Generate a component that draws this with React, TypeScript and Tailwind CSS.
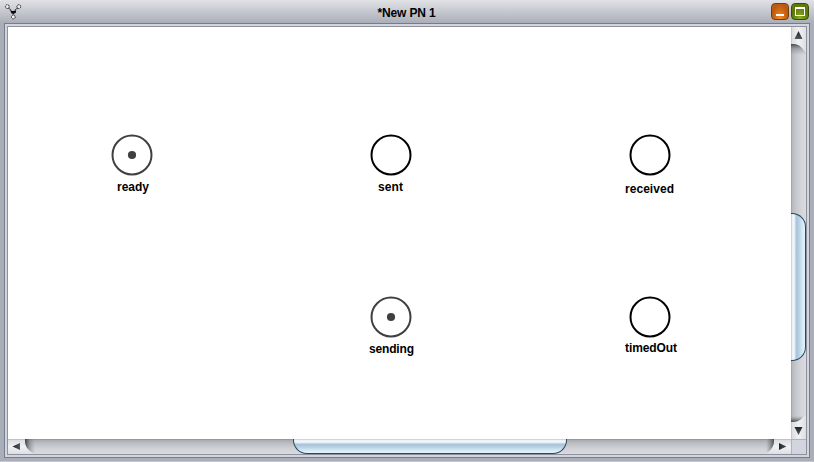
import React from "react";

type Place = { name: string; left: number; top: number; labelX: number; labelY: number; width: number; token?: boolean };

const places: Place[] = [
  { name: "ready", left: 103, top: 107, labelX: 6, labelY: 45, width: 32, token: true },
  { name: "sent", left: 362, top: 107, labelX: 8, labelY: 45, width: 25 },
  { name: "received", left: 621, top: 107, labelX: -4, labelY: 47, width: 49 },
  { name: "sending", left: 362, top: 269, labelX: -1, labelY: 45, width: 45, token: true },
  { name: "timedOut", left: 621, top: 269, labelX: -4, labelY: 44, width: 52 },
];

function PlaceNode({ place }: { place: Place }) {
  const color = place.token ? "#404040" : "#000000";
  return (
    <div className="absolute" style={{ left: place.left, top: place.top }}>
      <svg width="42" height="42" className="block">
        <circle cx="21" cy="21" r="19.5" fill="white" stroke={color} strokeWidth="2" />
        {place.token && <circle cx="21" cy="21" r="4.1" fill={color} />}
      </svg>
      <svg className="absolute h-4 overflow-visible" width={place.width} style={{ left: place.labelX, top: place.labelY }}>
        <text x="0" y="12" textLength={place.width} className="text-[12px] font-bold">{place.name}</text>
      </svg>
    </div>
  );
}

function TitleBar() {
  return (
    <header className="grid h-[23px] shrink-0 grid-cols-[1fr_auto_1fr] bg-linear-to-b from-[#e0e2e5] via-[#c5c8cf] to-[#aaaeb8]">
      <svg width="24" height="23" className="block" fill="none">
        <path d="M8 7.5 12 11.5M18 7.5 14 11.5M13.3 12v4" stroke="#303030" strokeWidth="1.3" strokeDasharray="2 .6" />
        <path d="M10.5 11h5.5v1.5l-1.5 1h-3z" fill="#080808" />
        <g fill="#eee" stroke="#292929" strokeDasharray="1.6 .6">
          <circle cx="7.3" cy="6.6" r="1.9" />
          <circle cx="18.8" cy="6.6" r="1.9" />
          <circle cx="13.3" cy="17" r="1.9" />
        </g>
      </svg>
      <h1 className="w-[59px] pt-[5px] text-[12px] leading-4 font-bold tracking-[-0.16px] whitespace-nowrap">*New PN 1</h1>
      <div className="flex justify-end gap-0.5 pt-[3px] pr-[5px]">
        <button aria-label="Minimize" className="flex h-[17px] w-[18px] items-end justify-center rounded-[4px] border border-[#70400f] bg-[radial-gradient(ellipse_at_50%_100%,#f08d30_0%,#d06a12_45%,#b8560e_75%,#bd6c35_100%)] pb-[3px]">
          <span className="h-[2px] w-2 bg-white" />
        </button>
        <button aria-label="Maximize" className="flex h-[17px] w-[18px] items-center justify-center rounded-[4px] border border-[#394e0c] bg-[radial-gradient(ellipse_at_50%_100%,#8eae32_0%,#6a8a0e_45%,#5a7406_75%,#718440_100%)]">
          <span className="h-[9px] w-[10px] border border-t-2 border-white" />
        </button>
      </div>
    </header>
  );
}

function VerticalScroll() {
  return (
    <div className="flex h-[412px] w-[15px] flex-col bg-[linear-gradient(90deg,#93959b_0,#b6b8be_1px,#c6c8ce_5px,#d2d4da_10px,#dadbe1_100%)]">
      <svg width="15" height="30" className="block shrink-0">
        <defs>
          <linearGradient id="button-v"><stop stopColor="#b4b6bb" /><stop offset=".08" stopColor="#dcdee1" /><stop offset=".5" stopColor="#f0f1f3" /><stop offset="1" stopColor="#dddfe4" /></linearGradient>
          <linearGradient id="shadow-v" gradientUnits="userSpaceOnUse" x1="0" x2="0" y1="17" y2="28"><stop stopColor="#303236" stopOpacity=".85" /><stop offset=".4" stopColor="#5b5e64" stopOpacity=".4" /><stop offset="1" stopColor="#73767d" stopOpacity="0" /></linearGradient>
          <linearGradient id="arrow-v" x1="0" x2="0" y1="0" y2="1"><stop stopColor="#222428" /><stop offset="1" stopColor="#55575c" /></linearGradient>
        </defs>
        <path d="M0 17H15V30H0Z" fill="url(#shadow-v)" />
        <path d="M0 0H15V26C12 23 10 17 2 17H0Z" fill="url(#button-v)" />
        <path d="M7.5 4 11.5 12H3.5Z" fill="url(#arrow-v)" />
      </svg>
      <div className="h-[156px] shrink-0" />
      <div className="h-[148px] w-[15px] shrink-0 rounded-r-[14px] border border-l-0 border-[#28465d] bg-[linear-gradient(90deg,#b5cbdf_0%,#f6faff_13%,#e2edf6_28%,#a9c2d5_36%,#b5cee0_55%,#d3e8f6_80%,#e5f4fd_100%)]" />
      <div className="flex-1" />
      <svg width="15" height="26" className="block shrink-0">
        <defs><linearGradient id="shadow-v-end" gradientUnits="userSpaceOnUse" x1="0" x2="0" y1="3" y2="9"><stop stopColor="#777" stopOpacity="0" /><stop offset="1" stopColor="#34363b" stopOpacity=".85" /></linearGradient></defs>
        <path d="M0 2H15V10H0Z" fill="url(#shadow-v-end)" />
        <path d="M0 9H2C9 9 12 4 15 1V26H0Z" fill="url(#button-v)" />
        <path d="M3.5 14H11.5L7.5 22Z" fill="url(#arrow-v)" />
      </svg>
    </div>
  );
}

function HorizontalScroll() {
  return (
    <div className="flex h-[15px] w-[783px] bg-[linear-gradient(180deg,#85878d_0,#a9abb1_1px,#bfc1c7_5px,#d0d2d8_10px,#dadbe1_100%)]">
      <svg width="30" height="15" className="block shrink-0">
        <defs>
          <linearGradient id="button-h" x1="0" x2="0" y1="0" y2="1"><stop stopColor="#aeb0b5" /><stop offset=".09" stopColor="#dcdee1" /><stop offset=".5" stopColor="#f0f1f3" /><stop offset="1" stopColor="#dddfe4" /></linearGradient>
          <linearGradient id="shadow-h" gradientUnits="userSpaceOnUse" x1="17" x2="27"><stop stopColor="#282a2e" stopOpacity=".85" /><stop offset=".45" stopColor="#55585e" stopOpacity=".4" /><stop offset="1" stopColor="#777" stopOpacity="0" /></linearGradient>
          <linearGradient id="arrow-h"><stop stopColor="#222428" /><stop offset="1" stopColor="#55575c" /></linearGradient>
        </defs>
        <path d="M17 0H30V15H17Z" fill="url(#shadow-h)" />
        <path d="M0 0H17V2C17 9 22 12 26 15H0Z" fill="url(#button-h)" />
        <path d="M4.5 7.5 12 4V11Z" fill="url(#arrow-h)" />
      </svg>
      <div className="w-[255px] shrink-0" />
      <div className="h-[15px] w-[274px] shrink-0 rounded-b-[14px] border border-t-0 border-[#28465d] bg-[linear-gradient(#b5cbdf_0%,#f6faff_13%,#e2edf6_28%,#a9c2d5_36%,#b5cee0_55%,#d3e8f6_80%,#e5f4fd_100%)]" />
      <div className="flex-1" />
      <svg width="26" height="15" className="block shrink-0">
        <defs><linearGradient id="shadow-h-end" gradientUnits="userSpaceOnUse" x1="1" x2="9"><stop stopColor="#777" stopOpacity="0" /><stop offset="1" stopColor="#34363b" stopOpacity=".8" /></linearGradient></defs>
        <path d="M0 0H10V15H0Z" fill="url(#shadow-h-end)" />
        <path d="M9 0H26V15H1C4 12 9 9 9 2Z" fill="url(#button-h)" />
        <path d="M14 4V11L21.5 7.5Z" fill="url(#arrow-h)" />
      </svg>
    </div>
  );
}

export default function App() {
  return (
    <main className="flex h-[462px] w-[814px] flex-col overflow-hidden rounded-t-[3px] border-b border-[#c3c6ce] bg-[#a9aeb9] font-['Liberation_Sans',Arial,sans-serif] text-black">
      <TitleBar />
      <div className="mx-1 h-[435px] border border-[#747d8b] bg-[#d3d5de] p-0.5">
        <div className="grid h-[429px] w-[800px] grid-cols-[783px_15px] grid-rows-[412px_15px] border border-[#8f929d]">
          <section className="relative bg-white">
            {places.map((place) => <PlaceNode key={place.name} place={place} />)}
          </section>
          <VerticalScroll />
          <HorizontalScroll />
          <div className="border-t border-l border-[#b0b3bc] bg-[#d3d5de]" />
        </div>
      </div>
    </main>
  );
}
